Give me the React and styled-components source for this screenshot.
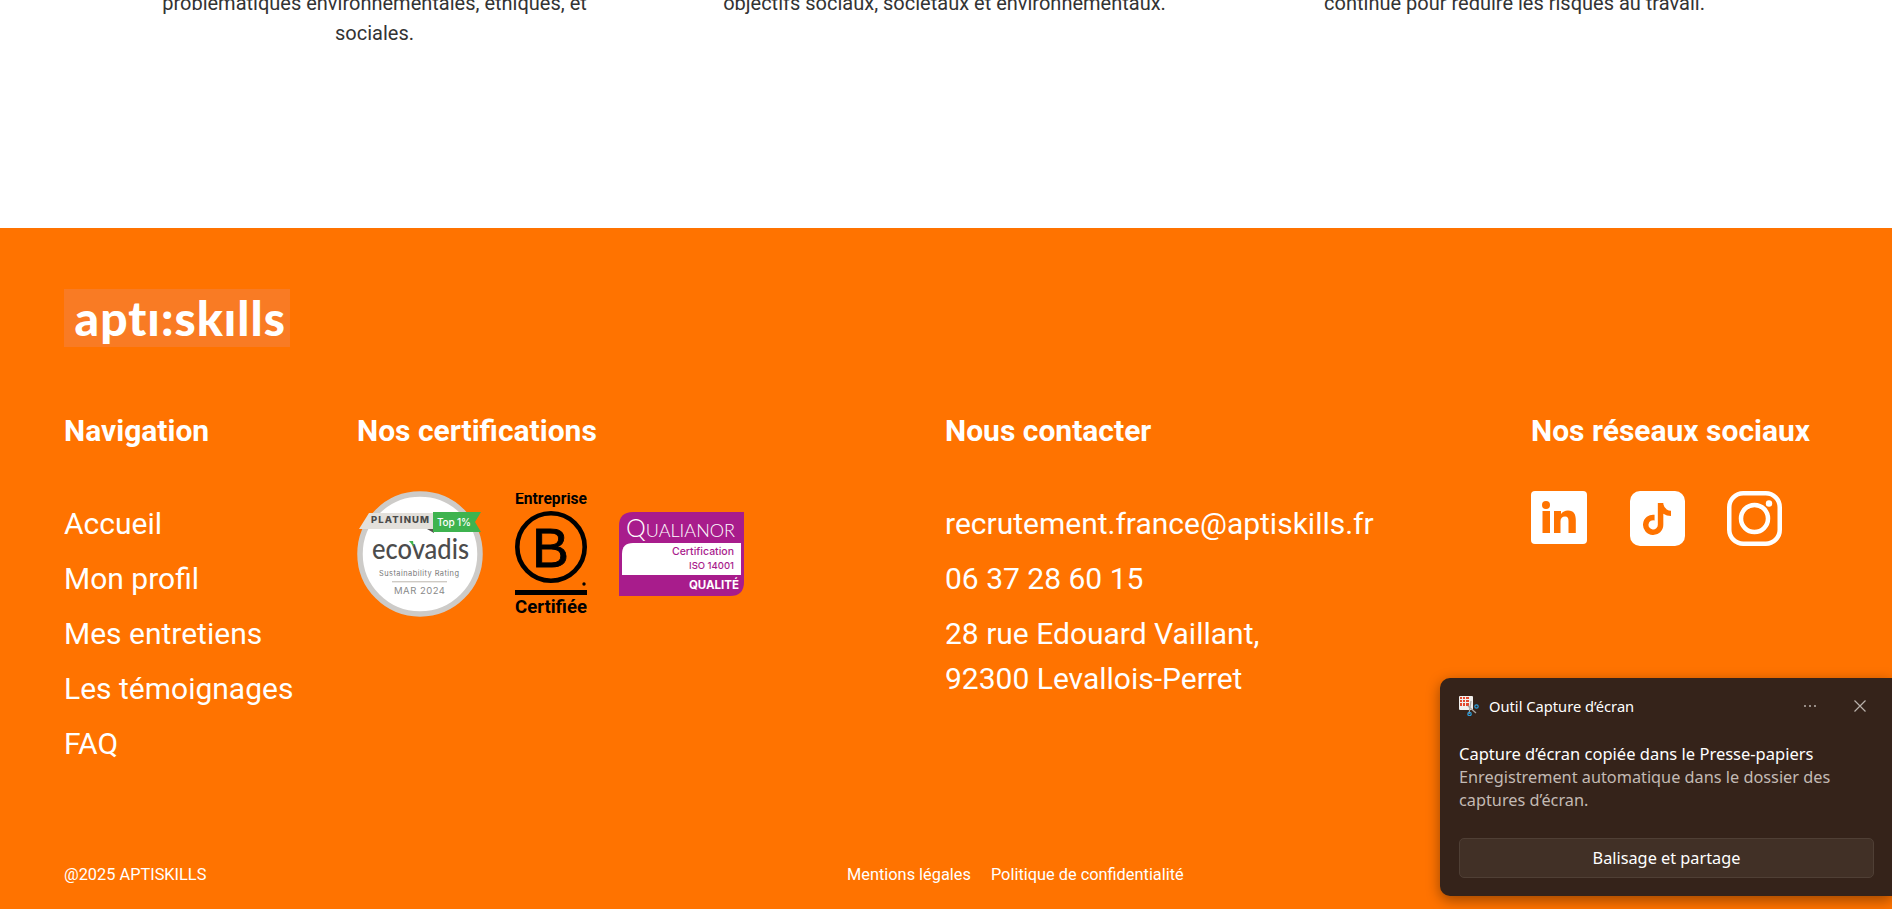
import styled, { createGlobalStyle } from 'styled-components';
import { FaTiktok } from 'react-icons/fa6';

const GlobalStyle = createGlobalStyle`
  html, body {
    margin: 0;
    height: 909px;
    overflow: hidden;
    background: #fff;
    font-family: Roboto, "Liberation Sans", sans-serif;
  }
  * { box-sizing: border-box; }
`;

const Page = styled.div`
  height: 909px;
  overflow: hidden;
`;

const Values = styled.section`
  height: 228px;
  display: grid;
  grid-template-columns: 425px 460px 425px;
  justify-content: space-between;
  padding: 0 165px 0 162px;
`;

const ValueText = styled.p`
  margin: -12px 0 0;
  font-size: 20px;
  line-height: 30px;
  color: #333;
  text-align: center;
`;

const Footer = styled.footer`
  height: 681px;
  background: #ff7300;
  color: #fff;
  padding: 61px 0 24px 64px;
  display: flex;
  flex-direction: column;
`;

const LogoBox = styled.div`
  width: 226px;
  height: 58px;
  background: #f97b24;
  display: flex;
  align-items: center;
  justify-content: flex-end;
  padding-right: 4px;
`;

const LogoText = styled.span`
  font-family: Lato, sans-serif;
  font-weight: 900;
  font-size: 48px;
  line-height: 58px;
  letter-spacing: 1px;
  white-space: nowrap;
`;

const Columns = styled.div`
  display: grid;
  grid-template-columns: 293px 588px 586px 1fr;
  margin-top: 65px;
`;

const Heading = styled.h3`
  margin: 0;
  font-size: 30px;
  font-weight: 700;
  line-height: 38px;
  white-space: nowrap;
`;

const LinkList = styled.ul`
  list-style: none;
  margin: 55px 0 0;
  padding: 0;
  display: flex;
  flex-direction: column;
  gap: 17px;
`;

const FooterLink = styled.li`
  font-size: 30px;
  line-height: 38px;
  white-space: nowrap;
`;

const Address = styled(FooterLink)`
  line-height: 45px;
  margin-top: -4px;
`;

const Badges = styled.div`
  display: flex;
  align-items: center;
  gap: 32px;
  margin-top: 41px;

  svg {
    display: block;
  }
`;

const Socials = styled.div`
  display: flex;
  gap: 42.5px;
  margin-top: 41px;
`;

const TiktokTile = styled.div`
  width: 55px;
  height: 55px;
  border-radius: 10px;
  background: #fff;
  color: #ff7300;
  display: flex;
  align-items: center;
  justify-content: center;
  font-size: 32px;
`;

const BottomBar = styled.div`
  display: grid;
  grid-template-columns: 783px auto;
  margin-top: auto;
  font-size: 16.35px;
  line-height: 20px;
`;

const LegalLinks = styled.div`
  display: flex;
  gap: 20px;
`;

const Toast = styled.aside`
  position: absolute;
  left: 1440px;
  top: 678px;
  width: 452px;
  height: 218px;
  border-radius: 10px 0 0 10px;
  background: #35231a;
  box-shadow: 0 4px 14px rgba(0, 0, 0, 0.4);
  padding: 15px 19px 0;
  font-family: "Noto Sans", sans-serif;
  color: #fff;
`;

const ToastHeader = styled.div`
  display: flex;
  align-items: center;
  height: 26px;
`;

const ToastApp = styled.span`
  margin-left: 10px;
  font-size: 14.7px;
  flex: 1;
`;

const ToastAction = styled.span`
  width: 20px;
  display: flex;
  justify-content: center;
  color: #b9b1ab;
  margin-left: 30px;
  margin-right: ${(p) => p.$end || 0}px;
`;

const ToastTitle = styled.div`
  margin-top: 23px;
  font-size: 16.5px;
  line-height: 23.5px;
`;

const ToastBody = styled.div`
  font-size: 16.3px;
  line-height: 23.5px;
  color: #c3bab4;
`;

const ToastButton = styled.button`
  display: block;
  width: 415px;
  height: 40px;
  margin-top: 25px;
  border: 1px solid #4f3f35;
  border-radius: 5px;
  background: #413026;
  color: #fff;
  font-family: inherit;
  font-size: 16.3px;
`;

const EcovadisBadge = () => (
  <svg width="126" height="126" viewBox="0 0 126 126">
    <circle cx="63" cy="63" r="60" fill="#fff" stroke="#cdcbc8" strokeWidth="5.5" />
    <polygon points="2,38 12,22 77,22 77,38" fill="#e3e0db" />
    <polygon points="70,38 77,38 77,42" fill="#55504c" />
    <polygon points="76,21 124,21 118,31 124,41 76,41" fill="#3eb34f" />
    <text x="14" y="32" fontFamily="Inter, sans-serif" fontSize="9.5" fontWeight="800" fill="#4a4a4a" textLength="58">PLATINUM</text>
    <text x="80" y="35" fontFamily="Inter, sans-serif" fontSize="10" fontWeight="500" fill="#fff" textLength="34">Top 1%</text>
    <text x="15" y="68" fontFamily="Lato, sans-serif" fontSize="28" fontWeight="500" fill="#4c4c4c" textLength="97" lengthAdjust="spacingAndGlyphs">ecovadis</text>
    <polygon points="52,50 56,50 57,56" fill="#3eb34f" />
    <text x="22" y="85" fontFamily="Inter, sans-serif" fontSize="7.4" fill="#777" textLength="80">Sustainability Rating</text>
    <rect x="35" y="90" width="55" height="1.4" fill="#cfcbc5" />
    <text x="37" y="103" fontFamily="Inter, sans-serif" fontSize="9.5" fill="#8a8a8a" textLength="51">MAR 2024</text>
  </svg>
);

const BCorpBadge = () => (
  <svg width="72" height="122" viewBox="0 0 72 122">
    <text x="0" y="11" fontFamily="Roboto, sans-serif" fontSize="16.5" fontWeight="700" textLength="72" lengthAdjust="spacingAndGlyphs">Entreprise</text>
    <circle cx="36" cy="54" r="33.7" fill="none" stroke="#000" strokeWidth="4.6" />
    <text x="17" y="74" fontFamily="Liberation Sans, sans-serif" fontSize="56" stroke="#000" strokeWidth="0.9" textLength="37" lengthAdjust="spacingAndGlyphs">B</text>
    <circle cx="69" cy="91" r="1.7" fill="#000" />
    <rect x="0" y="97" width="72" height="5" fill="#000" />
    <text x="0" y="120" fontFamily="Roboto, sans-serif" fontSize="19" fontWeight="700" textLength="72" lengthAdjust="spacingAndGlyphs">Certifiée</text>
  </svg>
);

const QualianorBadge = () => (
  <svg width="125" height="84" viewBox="0 0 125 84">
    <path d="M14 0H125V70Q125 84 111 84H0V14Q0 0 14 0Z" fill="#a81c8c" />
    <path d="M14 31H122V63H3V42Q3 31 14 31Z" fill="#fff" />
    <text x="7" y="25" fontFamily="Lato, sans-serif" fontSize="18" fontWeight="300" fill="#fff" textLength="109" lengthAdjust="spacingAndGlyphs">
      <tspan fontSize="25">Q</tspan>UALIANOR
    </text>
    <text x="115" y="43" textAnchor="end" fontFamily="Inter, sans-serif" fontSize="10.5" fontWeight="500" fill="#a81c8c">Certification</text>
    <text x="115" y="57" textAnchor="end" fontFamily="Inter, sans-serif" fontSize="9.5" fontWeight="500" fill="#a81c8c">ISO 14001</text>
    <text x="120" y="77" textAnchor="end" fontFamily="Inter, sans-serif" fontSize="11.5" fontWeight="700" fill="#fff">QUALITÉ</text>
  </svg>
);

const LinkedinIcon = () => (
  <svg width="56" height="53" viewBox="0 0 56 53">
    <rect width="56" height="53" rx="4" fill="#fff" />
    <circle cx="15" cy="14" r="4" fill="#ff7300" />
    <rect x="11.5" y="20" width="7.5" height="22" fill="#ff7300" />
    <path d="M23 20h7v3c1.500-2.300 4-3.600 7-3.600 6 0 7.800 4 7.800 9.600v13h-7.300v-12c0-2.800-.8-4.500-3.400-4.500-2.800 0-4.600 1.800-4.600 4.800v11.700h-6.500z" fill="#ff7300" />
  </svg>
);

const InstagramIcon = () => (
  <svg width="55" height="55" viewBox="0 0 55 55" fill="none" stroke="#fff" strokeWidth="4.5">
    <rect x="2.250" y="2.250" width="50.500" height="50.500" rx="14" />
    <circle cx="27.500" cy="27.500" r="13.500" />
    <circle cx="42" cy="12.500" r="3.200" fill="#fff" stroke="none" />
  </svg>
);

const SnipIcon = () => (
  <svg width="20" height="20" viewBox="0 0 20 20">
    <rect x="0" y="0" width="14" height="14" rx="1" fill="#f1efed" />
    <rect x="1" y="1" width="9" height="9" fill="#e2492e" />
    <path d="M3.500 1v9M6.500 1v9M1 3.500h9M1 6.500h9" stroke="#f1efed" strokeWidth="1" />
    <path d="M9 10L17 17M10 18L12 5" stroke="#a8a5a2" strokeWidth="1.300" fill="none" />
    <circle cx="17.500" cy="10.500" r="1.700" fill="none" stroke="#2a9ddc" strokeWidth="1.200" />
    <circle cx="10.500" cy="18" r="1.700" fill="none" stroke="#2a9ddc" strokeWidth="1.200" />
  </svg>
);

const App = () => (
  <Page>
    <GlobalStyle />
    <Values>
      <ValueText>
        problématiques environnementales, éthiques, et
        <br />
        sociales.
      </ValueText>
      <ValueText>objectifs sociaux, sociétaux et environnementaux.</ValueText>
      <ValueText>continue pour réduire les risques au travail.</ValueText>
    </Values>
    <Footer>
      <LogoBox>
        <LogoText>aptı:skılls</LogoText>
      </LogoBox>
      <Columns>
        <div>
          <Heading>Navigation</Heading>
          <LinkList>
            <FooterLink>Accueil</FooterLink>
            <FooterLink>Mon profil</FooterLink>
            <FooterLink>Mes entretiens</FooterLink>
            <FooterLink>Les témoignages</FooterLink>
            <FooterLink>FAQ</FooterLink>
          </LinkList>
        </div>
        <div>
          <Heading>Nos certifications</Heading>
          <Badges>
            <EcovadisBadge />
            <BCorpBadge />
            <QualianorBadge />
          </Badges>
        </div>
        <div>
          <Heading>Nous contacter</Heading>
          <LinkList>
            <FooterLink>recrutement.france@aptiskills.fr</FooterLink>
            <FooterLink>06 37 28 60 15</FooterLink>
            <Address>
              28 rue Edouard Vaillant,
              <br />
              92300 Levallois-Perret
            </Address>
          </LinkList>
        </div>
        <div>
          <Heading>Nos réseaux sociaux</Heading>
          <Socials>
            <LinkedinIcon />
            <TiktokTile>
              <FaTiktok />
            </TiktokTile>
            <InstagramIcon />
          </Socials>
        </div>
      </Columns>
      <BottomBar>
        <span>@2025 APTISKILLS</span>
        <LegalLinks>
          <span>Mentions légales</span>
          <span>Politique de confidentialité</span>
        </LegalLinks>
      </BottomBar>
    </Footer>
    <Toast>
      <ToastHeader>
        <SnipIcon />
        <ToastApp>Outil Capture d’écran</ToastApp>
        <ToastAction>
          <svg width="14" height="4" viewBox="0 0 14 4" fill="currentColor">
            <circle cx="2" cy="2" r="1" />
            <circle cx="7" cy="2" r="1" />
            <circle cx="12" cy="2" r="1" />
          </svg>
        </ToastAction>
        <ToastAction $end={3}>
          <svg width="14" height="14" viewBox="0 0 14 14" stroke="currentColor" strokeWidth="1.200">
            <path d="M1.500 1.500l11 11M12.500 1.500l-11 11" />
          </svg>
        </ToastAction>
      </ToastHeader>
      <ToastTitle>Capture d’écran copiée dans le Presse-papiers</ToastTitle>
      <ToastBody>
        Enregistrement automatique dans le dossier des
        <br />
        captures d’écran.
      </ToastBody>
      <ToastButton>Balisage et partage</ToastButton>
    </Toast>
  </Page>
);

export default App;
